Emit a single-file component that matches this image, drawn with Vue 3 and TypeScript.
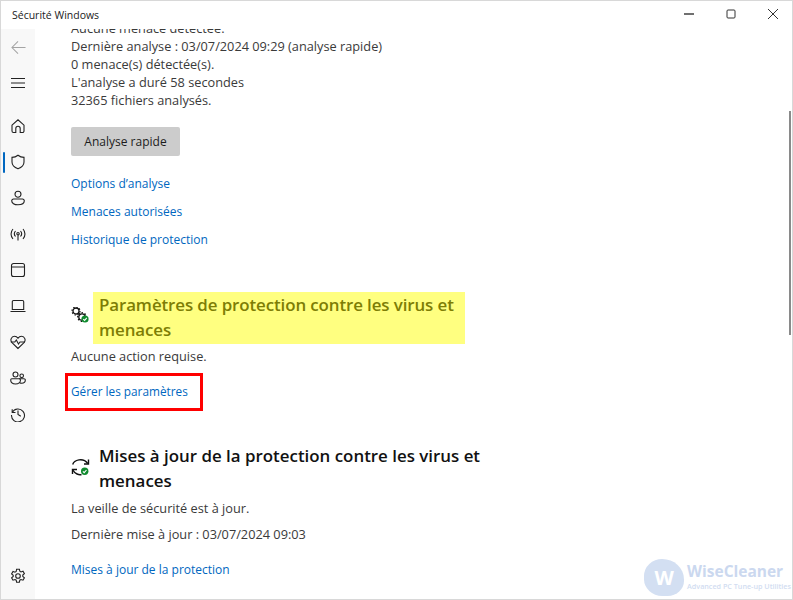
<template>
  <div class="window">
    <header class="titlebar">
      <span class="app-title">Sécurité Windows</span>
      <div class="controls">
        <svg class="ctl" viewBox="0 0 10 10"><path d="M0 5h10" stroke-width="1.4" /></svg>
        <svg class="ctl" viewBox="0 0 10 10"><rect x="1" y="1" width="8" height="8" rx="1" /></svg>
        <svg class="ctl" viewBox="0 0 10 10"><path d="M0 0l10 10M10 0L0 10" /></svg>
      </div>
    </header>

    <div class="body">
      <nav class="sidebar">
        <div class="nav-top">
          <svg class="nav-back" viewBox="0 0 16 16"><path d="M15.5 8H1M7.5 1.5L1 8l6.5 6.5" /></svg>
        </div>
        <div class="nav-menu">
          <svg class="nav-icon" viewBox="0 0 16 16"><path d="M1 3.5h14M1 8h14M1 12.5h14" /></svg>
        </div>
        <div v-for="item in navItems" :key="item.id" class="nav-item" :class="{ active: item.id === 'shield' }">
          <svg class="nav-icon" viewBox="0 0 16 16"><path v-for="d in item.paths" :key="d" :d="d" /></svg>
        </div>
        <div class="nav-item nav-settings">
          <svg class="nav-icon" viewBox="0 0 16 16">
            <circle cx="8" cy="8" r="2.3" />
            <path d="M6.6 1.2h2.8l.4 2 1.2.7 2-.7 1.4 2.4-1.6 1.4v1.4l1.6 1.4-1.4 2.4-2-.7-1.2.7-.4 2H6.6l-.4-2-1.2-.7-2 .7-1.4-2.4 1.6-1.4V7.3L1.6 5.9 3 3.5l2 .7 1.2-.7z" />
          </svg>
        </div>
      </nav>

      <main class="main">
        <div class="content">
          <section class="scan">
            <p v-for="line in scanLines" :key="line" class="line">{{ line }}</p>
            <button class="scan-btn" type="button">Analyse rapide</button>
            <ul class="links">
              <li v-for="link in scanLinks" :key="link"><a class="link">{{ link }}</a></li>
            </ul>
          </section>

          <section class="block settings">
            <div class="block-head">
              <svg class="block-icon" viewBox="0 0 22 22">
                <g class="gear">
                  <circle cx="5" cy="4" r="3" stroke-width="1.3" />
                  <circle cx="5" cy="4" r="4" stroke-width="1.2" stroke-dasharray="1.5 1.6" />
                  <circle cx="11" cy="10" r="3.2" stroke-width="1.3" />
                  <circle cx="11" cy="10" r="4.3" stroke-width="1.2" stroke-dasharray="1.5 1.7" />
                </g>
                <circle cx="14" cy="12" r="3.6" fill="#0f8a2e" />
                <path class="tick" d="M12.3 12.1l1.3 1.3 2.2-2.5" />
              </svg>
              <h2 class="heading marked">Paramètres de protection contre les virus et menaces</h2>
            </div>
            <p class="note">Aucune action requise.</p>
            <a class="link boxed">Gérer les paramètres</a>
          </section>

          <section class="block updates">
            <div class="block-head">
              <svg class="block-icon" viewBox="0 0 22 22">
                <g class="gear">
                  <path stroke-width="1.4" d="M1.7 7.5C3 3 12 0 16.8 6.5" />
                  <path stroke-width="1.4" d="M17.5 2.5V7H13" />
                  <path stroke-width="1.4" d="M1.8 13C4 17 8 18.2 10.5 17.5" />
                  <path stroke-width="1.4" d="M6 12.5H1.5V17" />
                </g>
                <circle cx="13.7" cy="14.2" r="3.7" fill="#0f8a2e" />
                <path class="tick" d="M11.9 14.3l1.3 1.3 2.3-2.6" />
              </svg>
              <h2 class="heading">Mises à jour de la protection contre les virus et menaces</h2>
            </div>
            <p class="note">La veille de sécurité est à jour.</p>
            <p class="note second">Dernière mise à jour : 03/07/2024 09:03</p>
            <a class="link last">Mises à jour de la protection</a>
          </section>
        </div>
      </main>
    </div>

    <div class="scrollbar"><div class="thumb"></div></div>

    <div class="watermark">
      <div class="wm-logo">W</div>
      <div class="wm-text">
        <div class="wm-name">WiseCleaner</div>
        <div class="wm-tag">Advanced PC Tune-up Utilities</div>
      </div>
    </div>
  </div>
</template>

<script setup lang="ts">
interface NavItem {
  id: string
  paths: string[]
}

const navItems: NavItem[] = [
  { id: 'home', paths: ['M2 7.2L8 1.8l6 5.4V13a1.5 1.5 0 0 1-1.5 1.5H10.2V10.5a2.2 2.2 0 0 0-4.4 0v4H3.5A1.5 1.5 0 0 1 2 13z'] },
  { id: 'shield', paths: ['M8 1.2c1.8 1.4 3.8 2.1 6 2.2v4.6c0 3.2-2.2 5.4-6 6.8-3.8-1.4-6-3.6-6-6.8V3.4c2.2-.1 4.2-.8 6-2.2z'] },
  { id: 'person', paths: ['M8 1.2a3 3 0 1 1 0 6 3 3 0 0 1 0-6z', 'M3.5 9h9a1.8 1.8 0 0 1 1.8 1.8c0 2.4-2.6 4-6.3 4s-6.3-1.6-6.3-4A1.8 1.8 0 0 1 3.5 9z'] },
  { id: 'network', paths: ['M8 6.5a1.2 1.2 0 1 1 0 2.4 1.2 1.2 0 0 1 0-2.4zM8 9v5.5', 'M5.5 5c-1.3 1.5-1.3 4 0 5.5M10.5 5c1.3 1.5 1.3 4 0 5.5', 'M3 3c-2.6 2.8-2.6 7.2 0 10M13 3c2.6 2.8 2.6 7.2 0 10'] },
  { id: 'browser', paths: ['M3.5 1.5h9a2 2 0 0 1 2 2v9a2 2 0 0 1-2 2h-9a2 2 0 0 1-2-2v-9a2 2 0 0 1 2-2zM1.5 5h13'] },
  { id: 'laptop', paths: ['M3.5 2.5h9a1.2 1.2 0 0 1 1.2 1.2v7.8H2.3V3.7a1.2 1.2 0 0 1 1.2-1.2zM.5 13.5h15'] },
  { id: 'health', paths: ['M8 14.5L2 8.7C-.2 6.3 1.2 2.3 4.5 2.3c1.5 0 2.7.8 3.5 2 .8-1.2 2-2 3.500-2 3.300 0 4.700 4 2.500 6.400z', 'M.8 8h4l1.500-2 2.200 4 1.500-2h5'] },
  { id: 'family', paths: ['M5.5 2a2.500 2.500 0 1 1 0 5 2.500 2.500 0 0 1 0-5zM11.700 4a1.800 1.800 0 1 1 0 3.600 1.800 1.800 0 0 1 0-3.600z', 'M1.800 8.800h7.400c.8 0 1.300.6 1.300 1.300 0 2.300-2 3.900-4.900 3.900S.7 12.400.7 10.100c0-.7.400-1.300 1.100-1.300z', 'M9 8.800h5a1.300 1.300 0 0 1 1.300 1.300c0 1.900-1.500 3.200-3.600 3.200-.8 0-1.500-.2-2-.5'] },
  { id: 'history', paths: ['M2.200 3.200v3.300h3.300', 'M2.300 6.300A6.500 6.500 0 1 1 1.500 9', 'M8 4.500V8.500l2.800 1.700'] },
]

const scanLines = [
  'Aucune menace détectée.',
  'Dernière analyse : 03/07/2024 09:29 (analyse rapide)',
  '0 menace(s) détectée(s).',
  "L'analyse a duré 58 secondes",
  '32365 fichiers analysés.',
]

const scanLinks = ['Options d’analyse', 'Menaces autorisées', 'Historique de protection']
</script>

<style>
html,
body {
  margin: 0;
  background: #fff;
}
</style>

<style scoped>
.window {
  position: relative;
  display: flex;
  flex-direction: column;
  width: 793px;
  height: 600px;
  box-sizing: border-box;
  overflow: hidden;
  background: #fff;
  border: 1px solid #d8d8d8;
  font-family: "Open Sans", "Noto Sans", sans-serif;
  font-size: 12.75px;
  color: #3a3a3a;
}

.titlebar {
  display: flex;
  flex: none;
  align-items: center;
  justify-content: space-between;
  height: 28px;
  padding: 0 0 0 11px;
  background: #fff;
}

.app-title {
  font-size: 10.5px;
  color: #222;
}

.controls {
  display: flex;
  align-items: center;
  gap: 32px;
  margin: 0 14px 2px 0;
}

.ctl {
  width: 10px;
  height: 10px;
  fill: none;
  stroke: #333;
  stroke-width: 1;
}

.body {
  display: flex;
  flex: 1;
  min-height: 0;
}

.sidebar {
  display: flex;
  flex: none;
  flex-direction: column;
  align-items: center;
  width: 34px;
  padding-bottom: 5px;
  box-sizing: border-box;
  background: #f8f8f8;
}

.nav-top {
  display: flex;
  align-items: center;
  height: 36px;
}

.nav-menu {
  display: flex;
  align-items: center;
  height: 36px;
  margin-bottom: 7px;
}

.nav-back {
  width: 15px;
  height: 15px;
  fill: none;
  stroke: #a4a4a4;
  stroke-width: 1.1;
}

.nav-item {
  position: relative;
  display: flex;
  align-items: center;
  justify-content: center;
  width: 100%;
  height: 36px;
  flex: none;
}

.nav-item.active::before {
  content: "";
  position: absolute;
  left: 2px;
  top: 8px;
  bottom: 7px;
  width: 2px;
  border-radius: 1px;
  background: #0067c0;
}

.nav-icon {
  width: 16px;
  height: 16px;
  fill: none;
  stroke: #222;
  stroke-width: 1.1;
}

.nav-settings {
  margin-top: auto;
}

.main {
  flex: 1;
  min-width: 0;
  overflow: hidden;
}

.content {
  /* the page is scrolled: the first line is cut by the title bar */
  margin-top: -10px;
  padding-left: 36px;
}

.line {
  margin: 0;
  height: 18px;
  line-height: 18px;
}

.scan-btn {
  display: block;
  width: 109px;
  height: 29px;
  margin: 18px 0 0;
  padding: 0;
  border: 0;
  border-radius: 2px;
  background: #cccccc;
  font: inherit;
  font-size: 12px;
  color: #1c1c1c;
}

.links {
  margin: 13px 0 0;
  padding: 0;
  list-style: none;
}

.links li {
  height: 28px;
  line-height: 28px;
}

.link {
  font-size: 12px;
  color: #0067c0;
  text-decoration: none;
}

.settings {
  margin-top: 39px;
}

.updates {
  margin-top: 32px;
}

.block-head {
  display: flex;
  align-items: center;
}

.block-icon {
  flex: none;
  width: 22px;
  height: 22px;
  fill: none;
}

.gear path,
.gear circle {
  fill: none;
  stroke: #111;
}

.tick {
  fill: none;
  stroke: #fff;
  stroke-width: 1.1;
}

.heading {
  width: 400px;
  margin: 0 0 0 6px;
  font-size: 16.9px;
  font-weight: 600;
  line-height: 25px;
  color: #111;
}

.marked {
  width: 366px;
  margin-left: 0;
  padding: 0 0 2px 6px;
  background: #ffff80;
  color: #7d7d05;
  letter-spacing: -0.1px;
}

.note {
  margin: 0;
  line-height: 18px;
}

.settings .note {
  margin-top: 3px;
}

.updates .note {
  margin-top: 6px;
}

.updates .second {
  margin-top: 8px;
}

.boxed {
  display: block;
  box-sizing: border-box;
  width: 138px;
  height: 38px;
  margin: 8px 0 0 -6px;
  padding-left: 3px;
  border: 3px solid #f00;
  font-size: 11.8px;
  line-height: 30px;
}

.last {
  display: block;
  margin-top: 18px;
  line-height: 18px;
}

.scrollbar {
  position: absolute;
  top: 26px;
  right: 0;
  bottom: 0;
  width: 3px;
}

.thumb {
  width: 2px;
  height: 224px;
  margin-top: 84px;
  background: #8a8a8a;
}

.watermark {
  position: absolute;
  right: 1px;
  bottom: 3px;
  display: flex;
  align-items: center;
  gap: 3px;
  pointer-events: none;
}

.wm-logo {
  width: 40px;
  height: 37px;
  border-radius: 50% 60% 45% 50%;
  background: #d3dff2;
  color: #fff;
  font-size: 20px;
  font-weight: 700;
  line-height: 37px;
  text-align: center;
}

.wm-text {
  margin-bottom: 3px;
}

.wm-name {
  font-size: 15.5px;
  font-weight: 700;
  line-height: 19px;
  color: #cbd8ef;
}

.wm-tag {
  font-size: 7.2px;
  font-weight: 600;
  line-height: 10px;
  color: #d2ddf1;
}
</style>
